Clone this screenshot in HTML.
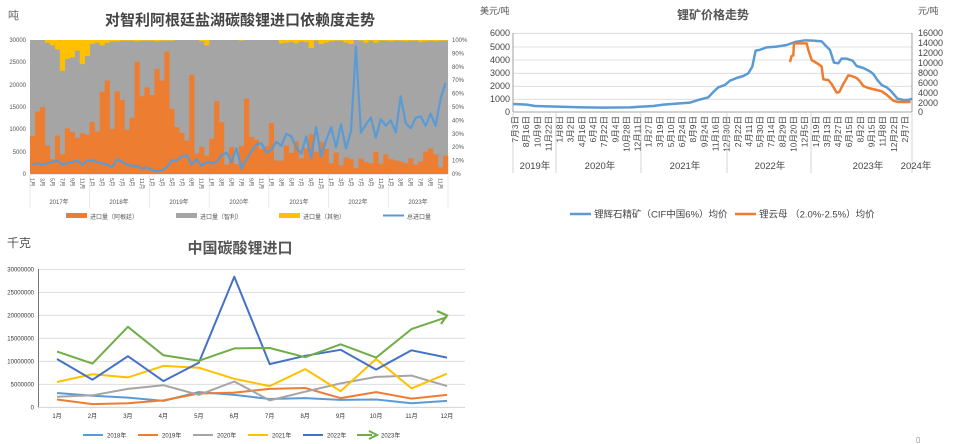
<!DOCTYPE html>
<html><head><meta charset="utf-8">
<style>
html,body{margin:0;padding:0;background:#fff;width:976px;height:444px;overflow:hidden}
svg{display:block;font-family:"Liberation Sans","Noto Sans CJK SC",sans-serif}
</style></head>
<body>
<svg id="s" width="976" height="444" viewBox="0 0 976 444" xmlns="http://www.w3.org/2000/svg">
<text x="8" y="19" font-size="11" fill="#666">吨</text>
<text x="240" y="25" font-size="15" font-weight="bold" fill="#444" text-anchor="middle">对智利阿根廷盐湖碳酸锂进口依赖度走势</text>
<rect x="30" y="40" width="418" height="134" fill="#a5a5a5"/>
<g id="c1"></g>
<g font-size="6" fill="#555" text-anchor="end">
<text x="26" y="42">30000</text><text x="26" y="64">25000</text><text x="26" y="87">20000</text><text x="26" y="109">15000</text><text x="26" y="131">10000</text><text x="26" y="154">5000</text><text x="26" y="176">0</text>
</g>
<g font-size="6" fill="#555" id="r1"></g>
<line x1="30" y1="174" x2="448" y2="174" stroke="#999" stroke-width="0.6"/>
<g id="m1" font-size="5.5" fill="#555"></g>
<g font-size="6" fill="#555" text-anchor="middle">
<text x="59" y="204">2017年</text><text x="119" y="204">2018年</text><text x="179" y="204">2019年</text><text x="239" y="204">2020年</text><text x="299" y="204">2021年</text><text x="358" y="204">2022年</text><text x="418" y="204">2023年</text>
</g>
<g font-size="6" fill="#555">
<rect x="66" y="213" width="21" height="5" fill="#ed7d31"/><text x="90" y="219">进口量（阿根廷）</text>
<rect x="176" y="213" width="21" height="5" fill="#a5a5a5"/><text x="200" y="219">进口量（智利）</text>
<rect x="279" y="213" width="21" height="5" fill="#ffc000"/><text x="303" y="219">进口量（其他）</text>
<line x1="383" y1="215.5" x2="404" y2="215.5" stroke="#5b9bd5" stroke-width="2"/><text x="407" y="219">总进口量</text>
</g>

<text x="480" y="14" font-size="9" fill="#555">美元/吨</text>
<text x="918" y="14" font-size="9" fill="#555">元/吨</text>
<text x="713" y="19" font-size="12" font-weight="bold" fill="#555" text-anchor="middle">锂矿价格走势</text>
<g stroke="#d9d9d9" stroke-width="0.8">
<line x1="513" y1="33.3" x2="912" y2="33.3"/><line x1="513" y1="47" x2="912" y2="47"/><line x1="513" y1="60" x2="912" y2="60"/><line x1="513" y1="73.3" x2="912" y2="73.3"/><line x1="513" y1="86.3" x2="912" y2="86.3"/><line x1="513" y1="99.3" x2="912" y2="99.3"/>
</g>
<line x1="513" y1="112" x2="912" y2="112" stroke="#888" stroke-width="0.8"/>
<line x1="513" y1="33" x2="513" y2="112" stroke="#888" stroke-width="0.8"/>
<line x1="912" y1="33" x2="912" y2="112" stroke="#888" stroke-width="0.8"/>
<g font-size="9" fill="#444" text-anchor="end">
<text x="510" y="36">6000</text><text x="510" y="50">5000</text><text x="510" y="63">4000</text><text x="510" y="76">3000</text><text x="510" y="89">2000</text><text x="510" y="102">1000</text><text x="510" y="115">0</text>
</g>
<g font-size="9" fill="#444">
<text x="918" y="36">16000</text><text x="918" y="46">14000</text><text x="918" y="56">12000</text><text x="918" y="66">10000</text><text x="918" y="76">8000</text><text x="918" y="86">6000</text><text x="918" y="96">4000</text><text x="918" y="106">2000</text><text x="918" y="115">0</text>
</g>
<g transform="translate(490,0) scale(0.3333)" fill="none" stroke-linejoin="round" stroke-width="7.5">
<path stroke="#5b9bd5" d="M70,312 L110,314 135,318 200,320 280,322 340,323 420,322 490,318 520,314 560,311 600,308 625,300 655,292 670,276 685,262 705,255 720,242 740,234 760,228 775,220 787,200 797,152 808,150 830,142 860,140 890,135 915,126 945,121 970,122 995,124 1008,138 1020,150 1032,188 1045,190 1055,176 1070,176 1088,182 1100,198 1120,204 1140,214 1150,222 1162,240 1175,255 1190,262 1202,272 1215,287 1222,296 1240,300 1255,300 1267,296"/>
<path stroke="#ed7d31" d="M900,186 L905,168 910,166 912,130 925,130 950,130 955,150 965,180 975,186 985,192 995,200 1000,238 1015,240 1025,252 1040,278 1048,276 1060,252 1075,226 1085,228 1100,234 1110,244 1120,258 1135,264 1160,270 1175,274 1190,284 1210,302 1225,306 1262,306"/>
</g>
<g id="d2" font-size="8.5" fill="#444"></g>
<g stroke="#ccc" stroke-width="0.8">
<line x1="513" y1="113" x2="513" y2="173"/><line x1="556" y1="113" x2="556" y2="173"/><line x1="641" y1="113" x2="641" y2="173"/><line x1="727" y1="113" x2="727" y2="173"/><line x1="811" y1="113" x2="811" y2="173"/><line x1="912" y1="113" x2="912" y2="173"/>
</g>
<g font-size="9.5" fill="#444" text-anchor="middle">
<text x="535" y="169">2019年</text><text x="600" y="169">2020年</text><text x="685" y="169">2021年</text><text x="770" y="169">2022年</text><text x="868" y="169">2023年</text><text x="916" y="169">2024年</text>
</g>
<line x1="570" y1="214" x2="591" y2="214" stroke="#5b9bd5" stroke-width="2.5"/>
<text x="594" y="217.5" font-size="9.5" fill="#444">锂辉石精矿（CIF中国6%）均价</text>
<line x1="735" y1="214" x2="756" y2="214" stroke="#ed7d31" stroke-width="2.5"/>
<text x="759" y="217.5" font-size="9.5" fill="#444">锂云母 （2.0%-2.5%）均价</text>

<text x="7" y="247" font-size="12" fill="#555">千克</text>
<text x="240" y="253" font-size="15" font-weight="bold" fill="#555" text-anchor="middle">中国碳酸锂进口</text>
<g stroke="#d9d9d9" stroke-width="0.8">
<line x1="38" y1="269.3" x2="465" y2="269.3"/><line x1="38" y1="292.3" x2="465" y2="292.3"/><line x1="38" y1="315.3" x2="465" y2="315.3"/><line x1="38" y1="338.3" x2="465" y2="338.3"/><line x1="38" y1="361.3" x2="465" y2="361.3"/><line x1="38" y1="384.3" x2="465" y2="384.3"/>
</g>
<line x1="38" y1="407.3" x2="465" y2="407.3" stroke="#ccc" stroke-width="0.8"/>
<line x1="38.5" y1="269" x2="38.5" y2="407" stroke="#555" stroke-width="0.8"/>
<g font-size="6" fill="#333" text-anchor="end">
<text x="34" y="271.5">30000000</text><text x="34" y="294.5">25000000</text><text x="34" y="317.5">20000000</text><text x="34" y="340.5">15000000</text><text x="34" y="363.5">10000000</text><text x="34" y="386.5">5000000</text><text x="34" y="409.5">0</text>
</g>
<g id="c3"></g>
<g id="m3" font-size="6" fill="#333" text-anchor="middle"></g>
<g font-size="6" fill="#333">
<line x1="83" y1="435" x2="103" y2="435" stroke="#5b9bd5" stroke-width="2"/><text x="107" y="437.5">2018年</text>
<line x1="138" y1="435" x2="158" y2="435" stroke="#ed7d31" stroke-width="2"/><text x="162" y="437.5">2019年</text>
<line x1="193" y1="435" x2="213" y2="435" stroke="#a5a5a5" stroke-width="2"/><text x="217" y="437.5">2020年</text>
<line x1="248" y1="435" x2="268" y2="435" stroke="#ffc000" stroke-width="2"/><text x="272" y="437.5">2021年</text>
<line x1="303" y1="435" x2="323" y2="435" stroke="#4472c4" stroke-width="2"/><text x="327" y="437.5">2022年</text>
<line x1="357" y1="435" x2="372" y2="435" stroke="#70ad47" stroke-width="2"/><path d="M369,431 L377,435 L369,439" fill="none" stroke="#70ad47" stroke-width="2"/><text x="381" y="437.5">2023年</text>
</g>
<text x="916" y="443" font-size="8" fill="#999">0</text>
</svg>
<script>
var NS="http://www.w3.org/2000/svg";
function el(p,t,a,txt){var e=document.createElementNS(NS,t);for(var k in a)e.setAttribute(k,a[k]);if(txt!==undefined)e.textContent=txt;p.appendChild(e);return e;}
var org=[8.5,14,15,6.3,3.3,8.6,4.4,10.2,9.4,8.1,9.1,8.8,11.7,9.5,18.4,20.9,10.1,18.5,16.6,9.9,12.6,25.1,17.4,19.4,17.7,23.5,20.9,27.4,14.6,10.5,9.2,7.5,22.2,4.6,6.1,4.1,7.9,16.3,11.6,2.1,6.0,2.2,6.3,16.9,8.3,7.7,5.6,6.2,11.4,3.0,3.0,6.4,4.7,7.3,3.5,5.8,8.9,5.0,7.2,5.6,2.4,4.8,1.9,3.7,3.3,1.3,3.5,2.7,2.4,5.0,2.3,4.4,3.3,3.0,2.8,2.4,3.5,2.1,2.8,5.0,5.7,4.4,1.5,4.1];
var yel=[0,0,0,2,4,7,23,14,13,8,18,12,  3,2,4,2,1,1,.5,.5,.5,1,.5,.5, .5,1,.5,.5,.5,0,0,0,0,0,1,4, 0,0,0,0,0,0,.5,0,0,0,0,0, 0,0,2.5,2,1.5,2.5,1,1.5,6,.5,3,2, 1,.5,.5,2,3,0,.5,2,.5,2,.5,.5, 1,.5,.5,1,.5,.5,1.5,1,.5,1,.5,.5];
var pct=[7,8,7,8,9,10,7,8,9,10,7,10, 10,9,8,7,5,11,9,7,6,6,4,5, 3,2,3,5,10,10,13,14,7,11,6,9, 8,9,14,16,9,19,4,11,17,22,23,16, 18,24,21,30,28,20,15,28,12,35,13,25, 35,20,37,19,32,95,31,37,42,27,41,36, 40,31,58,38,34,42,43,36,45,36,56,68];
var c1=document.getElementById('c1'),bw=418/84;
for(var i=0;i<84;i++){var x=30+i*bw;
 if(yel[i]>0)el(c1,'rect',{x:x,y:40,width:bw+0.2,height:yel[i]*1.34,fill:'#ffc000'});
 var h=org[i]/30*134;el(c1,'rect',{x:x,y:174-h,width:bw+0.2,height:h,fill:'#ed7d31'});}
var d='';for(var i=0;i<84;i++){d+=(i?'L':'M')+(30+(i+0.5)*bw).toFixed(1)+','+(174-pct[i]*1.34).toFixed(1)+' ';}
el(c1,'path',{d:d,fill:'none',stroke:'#5b9bd5','stroke-width':2.2,'stroke-linejoin':'round'});
var r1=document.getElementById('r1');
for(var k=0;k<=10;k++){el(r1,'text',{x:452,y:176-k*13.4},(k*10)+'%');}
var m1=document.getElementById('m1');var ml=['1月','3月','5月','7月','9月','11月'];
for(var i=0;i<84;i+=2){var x=30+(i+0.5)*bw-2;el(m1,'text',{transform:'translate('+x+',178) rotate(90)'},ml[(i%12)/2]);}
for(var y=0;y<=7;y++){el(m1,'line',{x1:30+y*12*bw,y1:175,x2:30+y*12*bw,y2:208,stroke:'#ddd','stroke-width':0.6});}
var dl=['7月3日','8月16日','10月9日','11月22日','1月8日','3月2日','4月16日','6月4日','7月22日','9月4日','10月28日','12月11日','1月27日','3月19日','5月10日','6月24日','8月9日','9月24日','11月16日','12月30日','2月22日','4月11日','5月30日','7月14日','8月29日','10月20日','12月5日','1月19日','3月13日','4月27日','6月15日','8月2日','9月15日','11月8日','12月22日','2月7日'];
var d2=document.getElementById('d2');
for(var i=0;i<36;i++){var x=518+i*11.14;el(d2,'text',{transform:'translate('+x+',116) rotate(-90)','text-anchor':'end'},dl[i]);}
var ser=[['#5b9bd5',[3.1,2.5,2.1,1.4,3.3,2.7,1.8,2.0,1.6,1.7,0.9,1.4]],
['#ed7d31',[1.7,0.7,0.9,1.5,3.0,3.2,4.0,4.2,2.0,3.3,1.9,2.7]],
['#a5a5a5',[2.3,2.6,4.0,4.8,2.7,5.6,1.5,3.4,5.2,6.6,6.9,4.6]],
['#ffc000',[5.5,7.2,6.5,9.0,8.6,6.2,4.6,8.3,3.5,10.5,4.1,7.3]],
['#4472c4',[10.5,6.0,11.1,5.7,9.7,28.4,9.4,11.2,12.5,8.2,12.4,10.8]],
['#70ad47',[12.1,9.5,17.5,11.3,10.1,12.8,12.9,10.9,13.7,10.8,17.0,19.6]]];
var c3=document.getElementById('c3');
function X(i){return 57+i*35.45;}function Y(v){return 407.3-v*4.6;}
ser.forEach(function(s){var d='';s[1].forEach(function(v,i){d+=(i?'L':'M')+X(i).toFixed(1)+','+Y(v).toFixed(1)+' ';});
 el(c3,'path',{d:d,fill:'none',stroke:s[0],'stroke-width':2,'stroke-linejoin':'round'});});
el(c3,'path',{d:'M437,311 L447,315.5 L441,324',fill:'none',stroke:'#70ad47','stroke-width':2.2});
var m3=document.getElementById('m3');
for(var i=0;i<12;i++)el(m3,'text',{x:X(i),y:418},(i+1)+'月');
</script>
</body></html>
